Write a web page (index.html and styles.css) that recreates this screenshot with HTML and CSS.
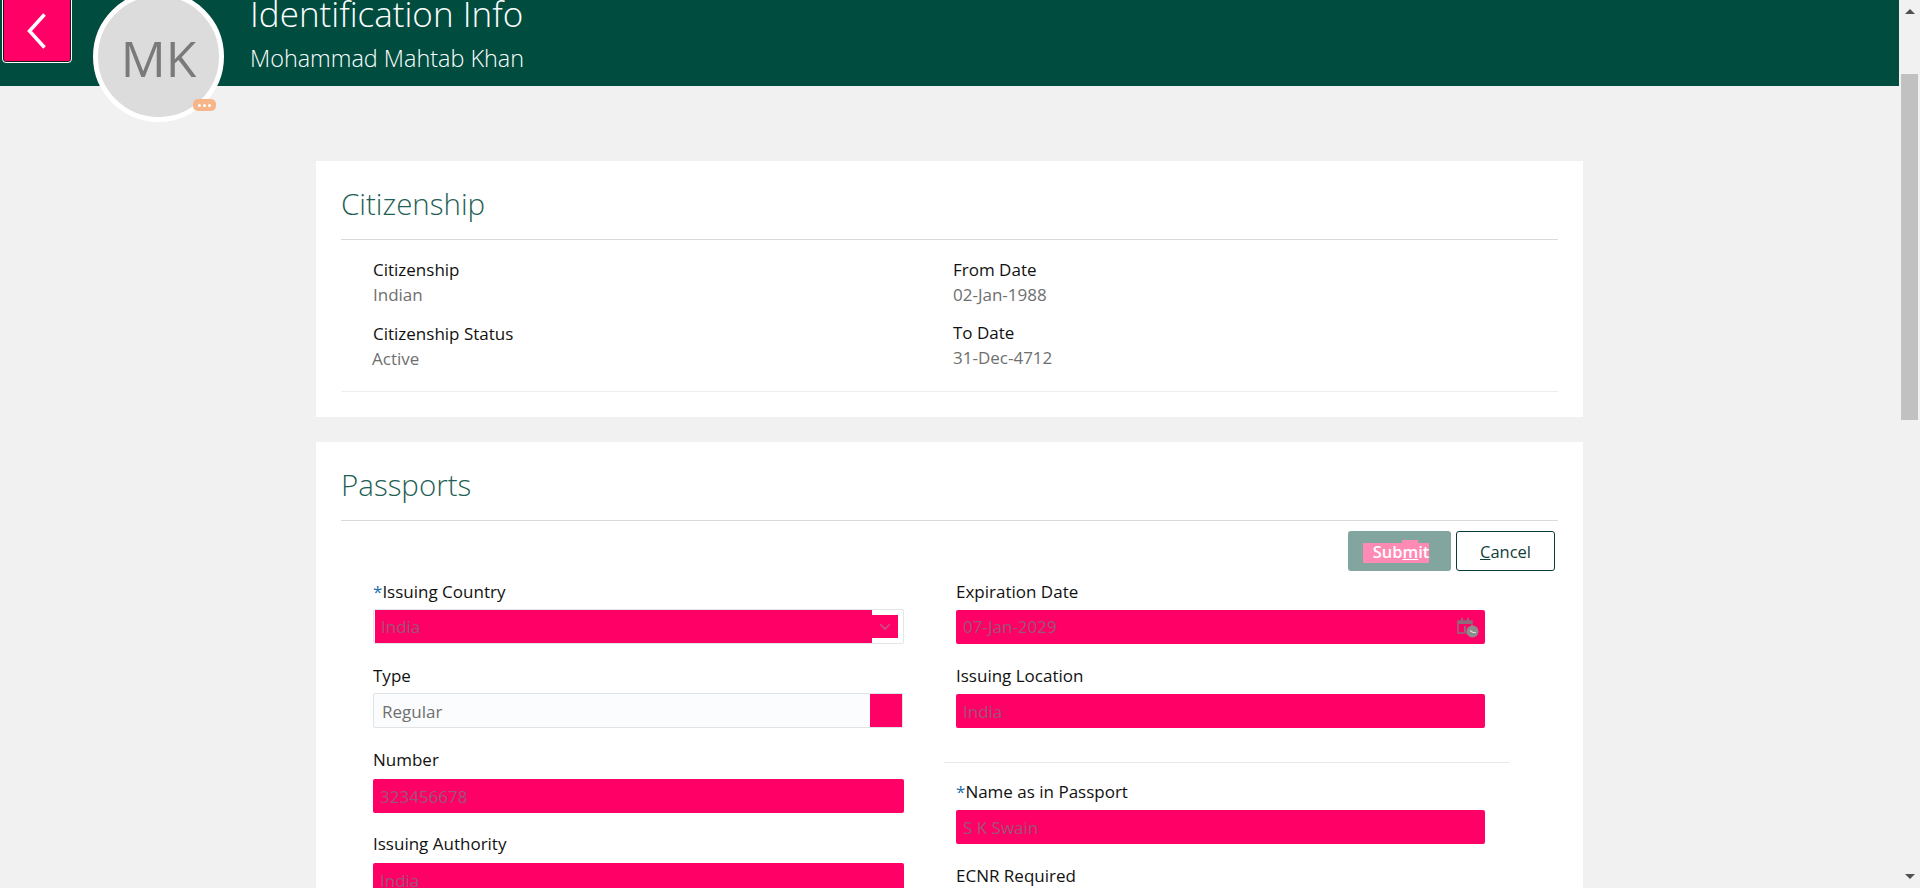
FILE: index.html
```html
<!DOCTYPE html>
<html lang="en">
<head>
    <meta charset="UTF-8">
    <title>Identification Info</title>
    <link rel="stylesheet" href="styles.css">
</head>
<body>
    <div class="page">
        <div class="main">
            <header class="topbar">
                <button class="back-btn" aria-label="Back">
                    <svg width="20" height="36" viewBox="0 0 20 36"><path d="M17.5 1.5 2.5 18l15 16.5" fill="none" stroke="#fff" stroke-width="3.5"/></svg>
                </button>
                <div class="avatar">
                    MK
                    <span class="avatar-badge"><i></i><i></i><i></i></span>
                </div>
                <div class="topbar-text">
                    <h1>Identification Info</h1>
                    <div class="person">Mohammad Mahtab Khan</div>
                </div>
            </header>

            <section class="card citizenship">
                <h2>Citizenship</h2>
                <div class="details">
                    <div class="detail">
                        <div class="detail-label">Citizenship</div>
                        <div class="detail-value">Indian</div>
                    </div>
                    <div class="detail">
                        <div class="detail-label">From Date</div>
                        <div class="detail-value">02-Jan-1988</div>
                    </div>
                    <div class="detail">
                        <div class="detail-label">Citizenship Status</div>
                        <div class="detail-value nudge">Active</div>
                    </div>
                    <div class="detail raised">
                        <div class="detail-label">To Date</div>
                        <div class="detail-value">31-Dec-4712</div>
                    </div>
                </div>
            </section>

            <section class="card passports">
                <h2>Passports</h2>
                <div class="actions">
                    <button class="btn btn-submit"><span class="hl">Sub<span class="hl-m">m</span>it</span></button>
                    <button class="btn btn-cancel"><u>C</u>ancel</button>
                </div>
                <div class="form">
                    <div class="col col-left">
                        <div class="field">
                            <label class="field-label"><span class="req">*</span>Issuing Country</label>
                            <div class="input input-select">
                                <div class="select-mask">India</div>
                                <div class="select-arrow">
                                    <svg width="12" height="8" viewBox="0 0 12 8"><path d="M1 1l5 5 5-5" fill="none" stroke="#c8508a" stroke-width="1.6"/></svg>
                                </div>
                            </div>
                        </div>
                        <div class="field">
                            <label class="field-label">Type</label>
                            <div class="input input-plain">
                                <span class="plain-text">Regular</span>
                                <span class="plain-mask"></span>
                            </div>
                        </div>
                        <div class="field">
                            <label class="field-label">Number</label>
                            <div class="input masked">323456678</div>
                        </div>
                        <div class="field">
                            <label class="field-label">Issuing Authority</label>
                            <div class="input masked">India</div>
                        </div>
                    </div>
                    <div class="col col-right">
                        <div class="field">
                            <label class="field-label">Expiration Date</label>
                            <div class="input masked with-icon">
                                07-Jan-2029
                                <svg class="cal-icon" width="22" height="21" viewBox="0 0 22 21">
                                    <path d="M1 4h14v12H1z" fill="none" stroke="#8f6a7c" stroke-width="1.6"/>
                                    <path d="M1 4h14v3H1zM4 1h2v4H4zM10 1h2v4h-2z" fill="#8f6a7c"/>
                                    <path d="M7 9h2v6H7z" fill="#8f6a7c"/>
                                    <circle cx="15.5" cy="14.5" r="6" fill="#8c8c8c"/>
                                    <path d="M13 13.5l3 2h3" fill="none" stroke="#ddd" stroke-width="1.2"/>
                                </svg>
                            </div>
                        </div>
                        <div class="field">
                            <label class="field-label">Issuing Location</label>
                            <div class="input masked">India</div>
                        </div>
                        <div class="col-divider"></div>
                        <div class="field">
                            <label class="field-label"><span class="req">*</span>Name as in Passport</label>
                            <div class="input masked">S K Swain</div>
                        </div>
                        <div class="field">
                            <label class="field-label">ECNR Required</label>
                        </div>
                    </div>
                </div>
            </section>
        </div>

        <div class="scrollbar">
            <span class="arrow-up"></span>
            <span class="thumb"></span>
            <span class="arrow-down"></span>
        </div>
    </div>
</body>
</html>
```

FILE: styles.css
```css
* { box-sizing: border-box; }
html, body {
    margin: 0;
    height: 888px;
    overflow: hidden;
}
body {
    font-family: "Open Sans", "Noto Sans", sans-serif;
    font-size: 17px;
    background-color: #f1f1f1;
    color: #111;
}
.page {
    display: flex;
    height: 888px;
    overflow: hidden;
}
.main {
    flex: 1;
    min-width: 0;
    overflow: hidden;
}

/* header */
.topbar {
    position: relative;
    display: flex;
    height: 86px;
    background-color: #004d40;
    color: #fff;
    padding-left: 250px;
}
.back-btn {
    position: absolute;
    left: 3px;
    top: -6px;
    width: 68px;
    height: 68px;
    display: flex;
    align-items: center;
    justify-content: center;
    padding: 6px 0 0 0;
    background-color: #ff0066;
    border: 1px solid #1a1a1a;
    border-radius: 3px;
    outline: 1px solid #fff;
}
.avatar {
    position: absolute;
    left: 93px;
    top: -9px;
    width: 131px;
    height: 131px;
    display: flex;
    align-items: center;
    justify-content: center;
    padding-top: 2px;
    border: 5px solid #fff;
    border-radius: 50%;
    background-color: #dcdcdc;
    color: #7a7a7a;
    font-size: 50px;
}
.avatar-badge {
    position: absolute;
    left: 95px;
    top: 103px;
    width: 23px;
    height: 12px;
    display: flex;
    align-items: center;
    justify-content: center;
    gap: 2px;
    background-color: #f6b68a;
    border-radius: 5px;
}
.avatar-badge i {
    width: 3px;
    height: 3px;
    border-radius: 50%;
    background-color: #fff;
}
.topbar-text {
    margin-top: -10px;
}
h1 {
    margin: 0;
    font-size: 35px;
    font-weight: 300;
    line-height: 48px;
}
.person {
    margin-top: 5px;
    font-size: 23.4px;
    font-weight: 300;
    line-height: 30px;
}

/* cards */
.card {
    margin: 0 316px 25px;
    padding: 0 25px;
    background-color: #fff;
}
.citizenship {
    margin-top: 75px;
    height: 256px;
}
h2 {
    margin: 0;
    height: 79px;
    padding-top: 23px;
    border-bottom: 1px solid #d8dbdc;
    color: #1f5f55;
    font-size: 29.5px;
    font-weight: 300;
    line-height: 40px;
}
.details {
    display: grid;
    grid-template-columns: 580px 1fr;
    align-content: start;
    padding: 17px 0 0 32px;
    height: 152px;
    border-bottom: 1px solid #eee;
    line-height: 25px;
}
.detail {
    height: 64px;
}
.detail.raised {
    margin-top: -1px;
}
.detail-label {
    font-weight: 500;
}
.detail-value {
    color: #6f6f6f;
}
.nudge {
    margin-left: -1px;
}

/* passports */
.passports {
    height: 460px;
}
.actions {
    display: flex;
    justify-content: flex-end;
    gap: 5px;
    padding: 10px 3px 0 0;
}
.btn {
    height: 40px;
    font-family: inherit;
    font-size: 16.5px;
    border-radius: 3px;
    padding: 0;
}
.btn-submit {
    width: 103px;
    border: none;
    background-color: #82a5a0;
    color: #fff;
    font-weight: 600;
}
.hl {
    display: inline-block;
    margin-right: 7px;
    padding-left: 10px;
    background-color: #ff8ab4;
    line-height: 18px;
}
.hl-m {
    display: inline-block;
    background-color: #ff8ab4;
    line-height: 23px;
    margin-top: -3px;
    text-decoration: underline;
}
.btn-cancel {
    width: 99px;
    background-color: #fff;
    border: 1px solid #0b3b36;
    color: #0f3f3a;
}
.form {
    display: grid;
    grid-template-columns: 583px 529px;
    margin-top: 9px;
    padding-left: 32px;
}
.field {
    margin-bottom: 20px;
}
.field-label {
    display: block;
    height: 30px;
    font-weight: 500;
    line-height: 23px;
}
.req {
    color: #1a6fb0;
}
.input {
    height: 34px;
    width: 531px;
    border-radius: 2px;
    line-height: 34px;
    padding-left: 7px;
}
.col-left .masked {
    margin-top: 1px;
    margin-bottom: -1px;
}
.col-right .input {
    width: 529px;
}
.masked {
    background-color: #ff0066;
    color: #9c5577;
    line-height: 36px;
}
.with-icon {
    display: flex;
    justify-content: space-between;
    align-items: center;
    padding-right: 6px;
}
.input-select {
    display: flex;
    align-items: center;
    height: 35px;
    margin-top: -1px;
    padding: 0 5px 0 1px;
    border: 1px solid #e3e6e8;
}
.select-mask {
    width: 497px;
    height: 100%;
    padding-left: 6px;
    background-color: #ff0066;
    color: #9c5577;
    line-height: 34px;
}
.select-arrow {
    flex: 1;
    height: 23px;
    display: flex;
    align-items: center;
    justify-content: center;
    background-color: #ff0066;
}
.input-plain {
    display: flex;
    justify-content: space-between;
    height: 35px;
    width: 530px;
    margin-top: -1px;
    padding: 0 0 0 8px;
    background-color: #fbfcfd;
    border: 1px solid #dfe3e5;
    color: #6f6f6f;
    line-height: 35px;
}
.plain-mask {
    width: 32px;
    background-color: #ff0066;
}
.col-divider {
    height: 1px;
    margin: 34px 0 17px -12px;
    width: 565px;
    background-color: #e8e8e8;
}

/* scrollbar */
.scrollbar {
    width: 21px;
    display: flex;
    flex-direction: column;
    align-items: center;
    padding: 9px 0;
    background-color: #f1f1f1;
}
.arrow-up {
    border-left: 5px solid transparent;
    border-right: 5px solid transparent;
    border-bottom: 5px solid #505050;
}
.thumb {
    width: 17px;
    height: 346px;
    margin-top: 60px;
    background-color: #c1c1c1;
}
.arrow-down {
    margin-top: auto;
    border-left: 5px solid transparent;
    border-right: 5px solid transparent;
    border-top: 5px solid #505050;
}
```
